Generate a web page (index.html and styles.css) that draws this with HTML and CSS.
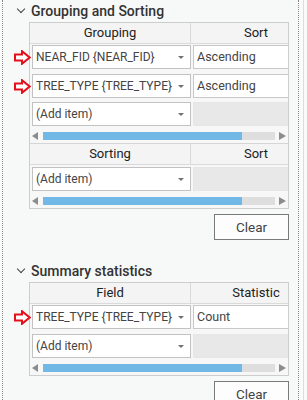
FILE: index.html
```html
<!DOCTYPE html>
<html lang="en">
  <head>
    <meta charset="UTF-8" />
    <meta name="viewport" content="width=device-width, initial-scale=1.0" />
    <title>Summarize Attributes</title>
    <link rel="stylesheet" href="styles.css">
  </head>
  <body>
    <div class="window">
      <div class="pane">
        <section class="group">
          <h2 class="group-title"><span class="chevron"></span>Grouping and Sorting</h2>
          <div class="grid">
            <div class="block">
              <div class="head">
                <div class="col-a">Grouping</div>
                <div class="col-b">Sort</div>
              </div>
              <div class="rows">
                <div class="row">
                  <svg class="marker" width="17" height="15" viewBox="0 0 17 15"><path d="M1 4.5 H8 V1.2 L15.6 7.5 L8 13.8 V10.5 H1 Z" fill="#fff" stroke="#e3101a" stroke-width="2" stroke-linejoin="miter"/></svg>
                  <div class="combo">NEAR_FID {NEAR_FID}</div>
                  <div class="cell">Ascending</div>
                </div>
                <div class="row">
                  <svg class="marker" width="17" height="15" viewBox="0 0 17 15"><path d="M1 4.5 H8 V1.2 L15.6 7.5 L8 13.8 V10.5 H1 Z" fill="#fff" stroke="#e3101a" stroke-width="2" stroke-linejoin="miter"/></svg>
                  <div class="combo">TREE_TYPE {TREE_TYPE}</div>
                  <div class="cell">Ascending</div>
                </div>
                <div class="row">
                  <div class="combo">(Add item)</div>
                  <div class="cell empty"></div>
                </div>
              </div>
              <div class="hscroll">
                <span class="arrow-l"></span>
                <div class="track"><div class="thumb" style="width: 199px"></div></div>
                <span class="arrow-r"></span>
              </div>
            </div>
            <div class="block second">
              <div class="head">
                <div class="col-a">Sorting</div>
                <div class="col-b">Sort</div>
              </div>
              <div class="rows">
                <div class="row">
                  <div class="combo">(Add item)</div>
                  <div class="cell empty"></div>
                </div>
              </div>
              <div class="hscroll">
                <span class="arrow-l"></span>
                <div class="track"><div class="thumb" style="width: 199px"></div></div>
                <span class="arrow-r"></span>
              </div>
            </div>
          </div>
          <div class="actions"><button class="btn">Clear</button></div>
        </section>

        <section class="group">
          <h2 class="group-title"><span class="chevron"></span>Summary statistics</h2>
          <div class="grid">
            <div class="block">
              <div class="head">
                <div class="col-a">Field</div>
                <div class="col-b">Statistic</div>
              </div>
              <div class="rows">
                <div class="row">
                  <svg class="marker" width="17" height="15" viewBox="0 0 17 15"><path d="M1 4.5 H8 V1.2 L15.6 7.5 L8 13.8 V10.5 H1 Z" fill="#fff" stroke="#e3101a" stroke-width="2" stroke-linejoin="miter"/></svg>
                  <div class="combo">TREE_TYPE {TREE_TYPE}</div>
                  <div class="cell">Count</div>
                </div>
                <div class="row">
                  <div class="combo">(Add item)</div>
                  <div class="cell empty"></div>
                </div>
              </div>
              <div class="hscroll">
                <span class="arrow-l"></span>
                <div class="track"><div class="thumb" style="width: 199px"></div></div>
                <span class="arrow-r"></span>
              </div>
            </div>
          </div>
          <div class="actions"><button class="btn">Clear</button></div>
        </section>
      </div>
      <div class="edge"></div>
    </div>
  </body>
</html>
```

FILE: styles.css
```css
body {
  margin: 0;
  background-color: #fafafa;
  font-family: Roboto, "Noto Sans", sans-serif;
  color: #444;
}
.window {
  display: flex;
  height: 400px;
  overflow: hidden;
}
.pane {
  margin-left: 2px;
  width: 295px;
  border-left: 1px dotted #8a8a8a;
  border-right: 1px dotted #8a8a8a;
  background-color: #f7f8f8;
}
.edge {
  margin-left: 4px;
  width: 3px;
  border-left: 1px solid #dcdcdc;
}
.group-title {
  display: flex;
  align-items: center;
  height: 22px;
  margin: 0;
  padding-left: 14px;
  font-size: 14px;
  font-weight: 500;
  color: #333;
}
.group + .group .group-title {
  margin-top: 20px;
}
.chevron {
  width: 5px;
  height: 5px;
  margin: 0 7px 4px 1px;
  border-right: 1.6px solid #444;
  border-bottom: 1.6px solid #444;
  transform: rotate(45deg);
}
.grid {
  width: 258px;
  margin-left: 26px;
  border: 1px solid #cdcdcd;
  background-color: #f7f7f7;
}
.block.second {
  border-top: 1px solid #d6d6d6;
}
.head {
  display: grid;
  grid-template-columns: 161px 1fr;
  height: 20px;
  border-bottom: 1px solid #dadada;
  background-color: #f4f4f4;
  font-size: 13px;
  line-height: 20px;
  color: #222;
  text-align: center;
}
.head .col-a {
  border-right: 1px solid #dadada;
}
/* the column is wider than the pane, so its title sits right of centre */
.head .col-b {
  padding-left: 33px;
}
.rows {
  display: flex;
  flex-direction: column;
  gap: 4.5px;
  padding-top: 1px;
}
.block.second .rows {
  padding-top: 2px;
}
.row {
  position: relative;
  display: grid;
  grid-template-columns: 161px 1fr;
  height: 24px;
}
.marker {
  position: absolute;
  left: -16px;
  top: 5px;
}
.combo {
  position: relative;
  margin-left: 2px;
  padding-left: 3px;
  border: 1px solid #c2c2c2;
  background-color: #fff;
  font-size: 12px;
  line-height: 22px;
  white-space: nowrap;
  overflow: hidden;
}
.combo::after {
  content: "";
  position: absolute;
  right: 6px;
  top: 10px;
  border-left: 3px solid transparent;
  border-right: 3px solid transparent;
  border-top: 3px solid #707070;
}
.cell {
  margin-left: 2px;
  padding-left: 3px;
  border: 1px solid #c8c8c8;
  border-right: none;
  background-color: #fff;
  font-size: 12.5px;
  line-height: 22px;
}
.cell.empty {
  border-color: #e6e6e6;
  background-color: #e8e8e8;
}
.hscroll {
  display: flex;
  align-items: center;
  height: 8px;
  margin-top: 6px;
  padding: 0 0 3px 2px;
}
.arrow-l {
  border-top: 4px solid transparent;
  border-bottom: 4px solid transparent;
  border-right: 6px solid #8c8c8c;
}
.arrow-r {
  margin-left: 4px;
  border-top: 4px solid transparent;
  border-bottom: 4px solid transparent;
  border-left: 7px solid #8c8c8c;
}
.track {
  width: 232px;
  height: 8px;
  margin-left: 5px;
  background-color: #dedede;
}
.thumb {
  height: 100%;
  background-color: #72b8e6;
}
.actions {
  display: flex;
  justify-content: flex-end;
  width: 260px;
  margin: 5px 0 0 26px;
}
.btn {
  width: 75px;
  height: 26px;
  border: 1px solid #7a7a7a;
  background-color: #fdfdfd;
  font-family: inherit;
  font-size: 13.5px;
  color: #444;
  padding: 0;
}
```
